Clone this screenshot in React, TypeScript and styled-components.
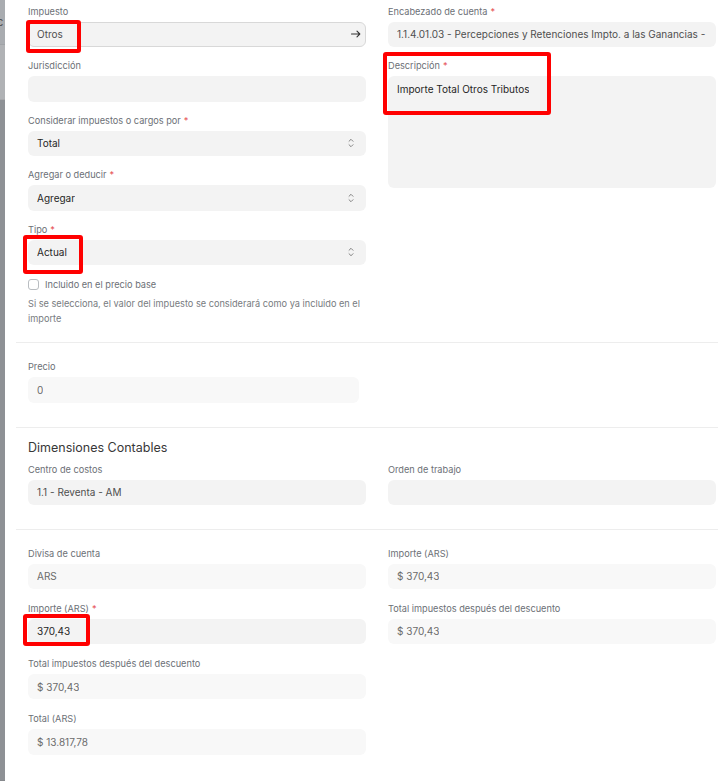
import React from 'react';
import styled, { createGlobalStyle } from 'styled-components';

const Global = createGlobalStyle`
  html, body { margin: 0; padding: 0; background: #fff; overflow: hidden; }
  body { font-family: Inter, "Noto Sans", sans-serif; color: #383838; }
  * { box-sizing: border-box; }
`;

const Page = styled.div`
  display: flex;
  width: 740px;
  height: 781px;
`;

const Backdrop = styled.div`
  width: 5px;
  flex-shrink: 0;
  display: flex;
  flex-direction: column;
  overflow: hidden;
`;

const BackdropPart = styled.div<{ $h?: number; $c: string }>`
  background: ${p => p.$c};
  height: ${p => (p.$h ? `${p.$h}px` : 'auto')};
  flex: ${p => (p.$h ? '0 0 auto' : '1')};
  border-bottom: 1px solid rgba(0, 0, 0, 0.05);
  overflow: hidden;
  padding-top: 15px;
  font-size: 11px;
  color: #555;
  white-space: nowrap;
  text-indent: -3px;
`;

const Modal = styled.div`
  flex: 1;
  padding-left: 11px;
  background: #fff;
`;

const Section = styled.section<{ $pt: number; $pb: number; $first?: boolean }>`
  border-top: ${p => (p.$first ? 'none' : '1px solid #ededed')};
  padding: ${p => p.$pt}px 12px ${p => p.$pb}px;
`;

const Heading = styled.h3`
  margin: 0 0 7px;
  font-size: 12.5px;
  line-height: 16px;
  font-weight: 400;
  color: #383838;
`;

const Columns = styled.div`
  display: grid;
  grid-template-columns: 338px 328px;
  column-gap: 22px;
  align-items: start;
`;

const Column = styled.div<{ $gap: number }>`
  display: flex;
  flex-direction: column;
  gap: ${p => p.$gap}px;
`;

const Field = styled.div<{ $width?: number }>`
  position: relative;
  display: flex;
  flex-direction: column;
  width: ${p => (p.$width ? `${p.$width}px` : 'auto')};
`;

const Label = styled.label`
  font-size: 9.2px;
  line-height: 13px;
  color: #6c7076;
  margin-bottom: 4px;
  white-space: nowrap;
`;

const Req = styled.span`
  color: #e5484d;
  margin-left: 3px;
`;

const Control = styled.div<{ $readOnly?: boolean; $bordered?: boolean; $strong?: boolean; $h?: number }>`
  position: relative;
  display: flex;
  align-items: ${p => (p.$h ? 'flex-start' : 'center')};
  justify-content: space-between;
  height: ${p => (p.$h ? p.$h : 25.5)}px;
  padding: ${p => (p.$h ? '6px 9px' : '0 9px')};
  border-radius: 6px;
  background: ${p => (p.$readOnly ? '#f8f8f8' : '#f3f3f3')};
  border: ${p => (p.$bordered ? '1px solid #d8d8d8' : 'none')};
  padding-left: ${p => (p.$bordered ? 8 : 9)}px;
  font-size: 10px;
  line-height: 14px;
  color: ${p => (p.$readOnly ? '#6b6b6b' : p.$strong ? '#262626' : '#4f4f4f')};
  font-weight: 400;
`;

const Value = styled.span`
  white-space: nowrap;
  overflow: hidden;
`;

const IconSlot = styled.span<{ $mr: number }>`
  display: flex;
  flex-shrink: 0;
  margin-right: ${p => p.$mr}px;
`;

const CheckRow = styled.label`
  display: flex;
  align-items: center;
  gap: 6px;
  margin-top: 12.5px;
  font-size: 9.2px;
  line-height: 14px;
  color: #6c7076;
`;

const CheckBox = styled.span`
  width: 11px;
  height: 11px;
  border: 1px solid #b9bdc1;
  border-radius: 3px;
  background: #fff;
`;

const Help = styled.p`
  margin: 4.5px 0 0;
  font-size: 9.2px;
  line-height: 15px;
  color: #777b80;
`;

const Annotation = styled.div<{ $l: number; $t: number; $w: number; $h: number }>`
  position: absolute;
  left: ${p => p.$l}px;
  top: ${p => p.$t}px;
  width: ${p => p.$w}px;
  height: ${p => p.$h}px;
  border: 4px solid #ff0000;
  border-radius: 3px;
  pointer-events: none;
  z-index: 2;
`;

const Arrow = () => (
  <svg width="10" height="10" viewBox="0 0 10 10">
    <path d="M0.5 5h8.2M6 2.2l2.8 2.8L6 7.8" fill="none" stroke="#333" strokeWidth="1.1" strokeLinecap="round" strokeLinejoin="round" />
  </svg>
);

const Chevrons = () => (
  <svg width="8" height="12" viewBox="0 0 8 12">
    <path d="M2 4.3L4 2.3l2 2M2 7.7l2 2 2-2" fill="none" stroke="#777" strokeWidth="0.9" strokeLinecap="round" strokeLinejoin="round" />
  </svg>
);

type Ann = { l: number; t: number; w: number; h: number };

const InputField: React.FC<{
  label: string;
  required?: boolean;
  value?: string;
  readOnly?: boolean;
  strong?: boolean;
  bordered?: boolean;
  icon?: 'arrow' | 'select';
  width?: number;
  height?: number;
  controlAnn?: Ann;
  fieldAnn?: Ann;
  children?: React.ReactNode;
}> = ({ label, required, value, readOnly, strong, bordered, icon, width, height, controlAnn, fieldAnn, children }) => (
  <Field $width={width}>
    {fieldAnn && <Annotation $l={fieldAnn.l} $t={fieldAnn.t} $w={fieldAnn.w} $h={fieldAnn.h} />}
    <Label>
      {label}
      {required && <Req>*</Req>}
    </Label>
    <Control $readOnly={readOnly} $strong={strong} $bordered={bordered} $h={height}>
      <Value>{value}</Value>
      {icon === 'arrow' && (
        <IconSlot $mr={-5}>
          <Arrow />
        </IconSlot>
      )}
      {icon === 'select' && (
        <IconSlot $mr={2}>
          <Chevrons />
        </IconSlot>
      )}
      {controlAnn && <Annotation $l={controlAnn.l} $t={controlAnn.t} $w={controlAnn.w} $h={controlAnn.h} />}
    </Control>
    {children}
  </Field>
);

export default function App() {
  return (
    <>
      <Global />
      <Page>
        <Backdrop>
          <BackdropPart $h={45} $c="#a9acb0">c</BackdropPart>
          <BackdropPart $h={55} $c="#b0b2b5" />
          <BackdropPart $c="#8e9195" />
        </Backdrop>
        <Modal>
          <Section $first $pt={4.5} $pb={15.5}>
            <Columns>
              <Column $gap={12}>
                <InputField label="Impuesto" value="Otros" bordered icon="arrow" controlAnn={{ l: -3, t: -2.5, w: 55, h: 32.5 }} />
                <InputField label="Jurisdicción" />
                <InputField label="Considerar impuestos o cargos por" required value="Total" strong icon="select" />
                <InputField label="Agregar o deducir" required value="Agregar" strong icon="select" />
                <InputField label="Tipo" required value="Actual" strong icon="select" controlAnn={{ l: -5, t: -4.5, w: 60, h: 38.5 }}>
                  <CheckRow>
                    <CheckBox />
                    Incluido en el precio base
                  </CheckRow>
                  <Help>
                    Si se selecciona, el valor del impuesto se considerará como ya incluido en el importe
                  </Help>
                </InputField>
              </Column>
              <Column $gap={12}>
                <InputField
                  label="Encabezado de cuenta"
                  required
                  value="1.1.4.01.03 - Percepciones y Retenciones Impto. a las Ganancias - AM"
                />
                <InputField
                  label="Descripción"
                  required
                  value="Importe Total Otros Tributos"
                  strong
                  height={112}
                  fieldAnn={{ l: -5, t: -7, w: 168, h: 63 }}
                />
              </Column>
            </Columns>
          </Section>

          <Section $pt={17.5} $pb={24}>
            <InputField label="Precio" value="0" readOnly width={331} />
          </Section>

          <Section $pt={12} $pb={23.5}>
            <Heading>Dimensiones Contables</Heading>
            <Columns>
              <Column $gap={12}>
                <InputField label="Centro de costos" value="1.1 - Reventa - AM" />
              </Column>
              <Column $gap={12}>
                <InputField label="Orden de trabajo" />
              </Column>
            </Columns>
          </Section>

          <Section $pt={17} $pb={24}>
            <Columns>
              <Column $gap={12.7}>
                <InputField label="Divisa de cuenta" value="ARS" readOnly />
                <InputField label="Importe (ARS)" required value="370,43" strong controlAnn={{ l: -5, t: -4.8, w: 67, h: 32 }} />
                <InputField label="Total impuestos después del descuento" value="$ 370,43" readOnly />
                <InputField label="Total (ARS)" value="$ 13.817,78" readOnly />
              </Column>
              <Column $gap={12.7}>
                <InputField label="Importe (ARS)" value="$ 370,43" readOnly />
                <InputField label="Total impuestos después del descuento" value="$ 370,43" readOnly />
              </Column>
            </Columns>
          </Section>
        </Modal>
      </Page>
    </>
  );
}
